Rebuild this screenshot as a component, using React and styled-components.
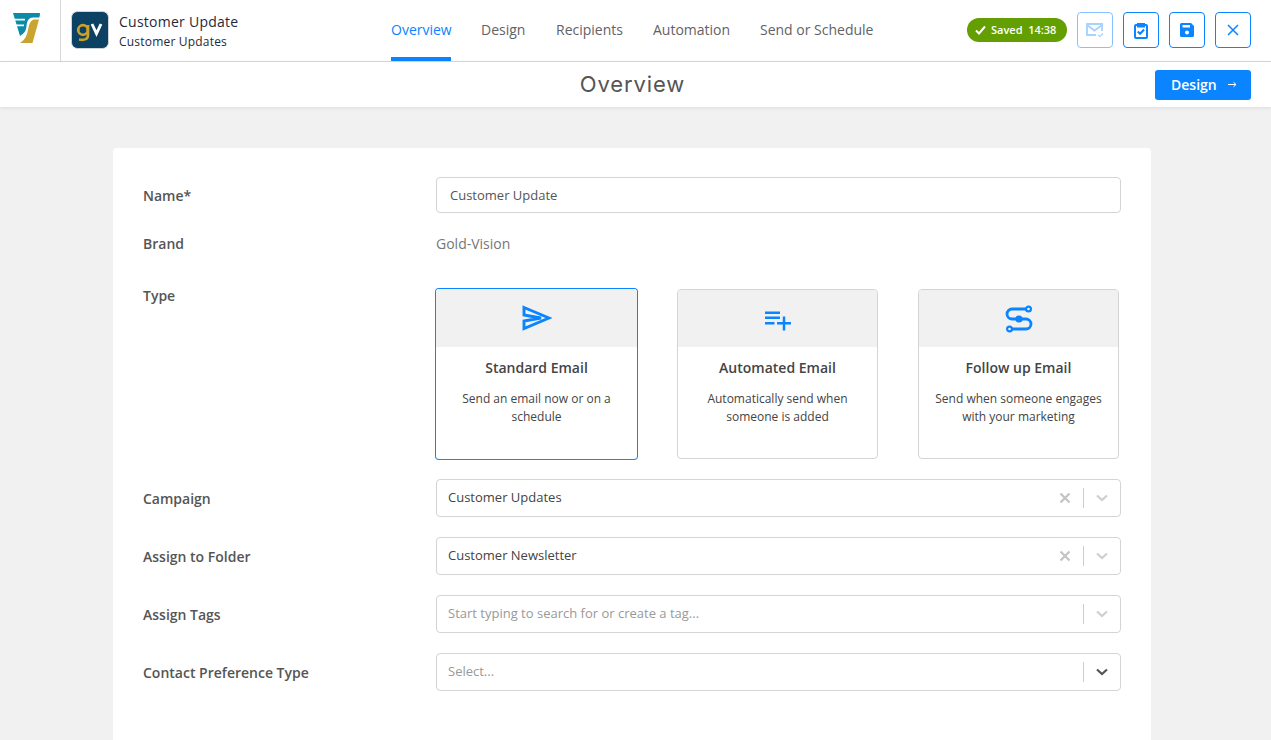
import React from "react";
import styled, { createGlobalStyle } from "styled-components";

const Global = createGlobalStyle`
  html, body { margin: 0; padding: 0; height: 100%; overflow: hidden; }
  body { background: #f1f1f1; font-family: "Open Sans", "Noto Sans", sans-serif; color: #333; }
  * { box-sizing: border-box; }
`;

const Page = styled.div`position: relative; width: 1271px; height: 740px; overflow: hidden; background: #f1f1f1;`;
const TopBar = styled.header`
  position: relative; height: 62px; background: #fff; border-bottom: 1px solid #d8d8d8;
`;
const LogoCell = styled.div`
  position: absolute; left: 0; top: 0; width: 61px; height: 61px; border-right: 1px solid #d8d8d8;
`;
const LogoSvg = styled.svg`position: absolute; left: 12px; top: 12px;`;
const BrandBadge = styled.svg`position: absolute; left: 71px; top: 11px; border-radius: 6px;`;
const TitleBlock = styled.div`position: absolute; left: 119px; top: 12px; color: #1f2a3a;`;
const Title = styled.div`font-size: 14px; line-height: 19px; font-weight: 500; letter-spacing: .25px;`;
const Subtitle = styled.div`font-size: 12px; line-height: 17px; margin-top: 2px; font-weight: 500; letter-spacing: .2px;`;
const Tab = styled.div`
  position: absolute; top: 0; height: 61px; line-height: 60px; font-size: 14px;
  left: ${p => p.$left}px;
  ${p => p.$active && "width: 60px; white-space: nowrap;"}
  color: ${p => (p.$active ? "#0a84ff" : "#5f6368")};
  border-bottom: ${p => (p.$active ? "4px solid #0a84ff" : "none")};
`;
const SavedPill = styled.div`
  position: absolute; left: 967px; top: 18px; width: 100px; height: 24px; border-radius: 12px; background: #639f00;
  color: #fff; font-size: 11px; font-weight: 600; line-height: 24px; padding-left: 8px;
  display: flex; align-items: center; gap: 5px; white-space: pre;
`;
const IconBtn = styled.div`
  position: absolute; top: 12px; left: ${p => p.$left}px; width: 36px; height: 36px; border-radius: 4px;
  border: 1px solid ${p => (p.$faded ? "#85c1ff" : "#0a84ff")}; background: #fff;
  display: flex; align-items: center; justify-content: center;
`;
const SubBar = styled.div`
  position: relative; height: 45px; background: #fff; box-shadow: 0 1px 4px rgba(0,0,0,.09);
`;
const Heading = styled.div`
  position: absolute; left: 0; width: 1265px; top: 8px; text-align: center; font-family: Inter, "Open Sans", sans-serif;
  font-size: 22px; line-height: 28px; color: #555; font-weight: 400; letter-spacing: .9px;
`;
const PrimaryBtn = styled.div`
  position: absolute; left: 1155px; top: 8px; width: 96px; height: 30px; border-radius: 3px; background: #0a84ff; color: #fff;
  font-size: 14px; font-weight: 600; display: flex; align-items: center; padding: 0 0 2px 16px; gap: 11px;
`;
const Card = styled.main`
  position: absolute; left: 113px; top: 148px; width: 1038px; height: 620px; background: #fff; border-radius: 4px;
`;
const Label = styled.div`
  position: absolute; left: 30px; top: ${p => p.$top}px; font-size: 14px; line-height: 20px; font-weight: 600; color: #555;
`;
const TextInput = styled.div`
  position: absolute; left: 323px; top: 29px; width: 685px; height: 36px; border: 1px solid #d4d4d4; border-radius: 4px;
  font-size: 13px; line-height: 35px; padding-left: 13px; color: #555;
`;
const Plain = styled.div`position: absolute; left: 323px; top: 86px; font-size: 14px; line-height: 20px; color: #777;`;
const TypeCard = styled.div`
  position: absolute; top: 141px; left: ${p => p.$left}px; width: ${p => (p.$sel ? 203 : 201)}px; height: ${p => (p.$sel ? 172 : 170)}px;
  ${p => p.$sel && "top: 140px;"}
  border: 1px solid ${p => (p.$sel ? "#0a84ff" : "#d4d4d4")}; border-radius: 4px; overflow: hidden; text-align: center;
  ${p => p.$sel && "border-bottom-color: #3a7fc4;"}
`;
const TypeHead = styled.div`
  height: ${p => (p.$sel ? 58 : 57)}px; background: #f1f1f1; display: flex; align-items: center; justify-content: center;
`;
const TypeTitle = styled.div`margin-top: 11px; font-size: 14px; line-height: 20px; font-weight: 600; color: #444;`;
const TypeDesc = styled.div`margin: 12px auto 0; width: 176px; font-size: 12px; line-height: 18px; color: #444;`;
const Select = styled.div`
  position: absolute; left: 323px; top: ${p => p.$top}px; width: 685px; height: 38px; border: 1px solid #d4d4d4; border-radius: 4px;
`;
const SelectText = styled.div`
  position: absolute; left: 11px; top: 0; line-height: 35px; font-size: 13px; color: ${p => (p.$ph ? "#999" : "#444")};
`;
const Sep = styled.div`position: absolute; left: 646px; top: 8px; width: 1px; height: 20px; background: #ccc;`;
const ClearIcon = styled.svg`position: absolute; left: 622px; top: 12px;`;
const Chevron = styled.svg`position: absolute; left: 658px; top: 13px;`;

const Select1 = ({ top, text, ph, clear, dark }) => (
  <Select $top={top}>
    <SelectText $ph={ph}>{text}</SelectText>
    {clear && (
      <ClearIcon width="12" height="12" viewBox="0 0 12 12">
        <path d="M1.5 1.5l9 9M10.5 1.5l-9 9" stroke="#c4c4c4" strokeWidth="2.3" fill="none" />
      </ClearIcon>
    )}
    <Sep />
    <Chevron width="14" height="10" viewBox="0 0 14 10">
      <path d="M2 2.5l5 4.6 5-4.6" stroke={dark ? "#555" : "#cfcfcf"} strokeWidth="2.2" fill="none" />
    </Chevron>
  </Select>
);

export default function App() {
  return (
    <Page>
      <Global />
      <TopBar>
        <LogoCell>
          <LogoSvg width="30" height="34" viewBox="0 0 30 34">
            <path d="M1 1H27.500Q28.300 1 28 2.500L27.300 5.500H21C16 5.500 15 10 14.500 14C14 18 13 21 8 24Z" fill="#0b8ba8" />
            <path d="M0 7.600H13M0 13.400H12" stroke="#fff" strokeWidth="1.7" fill="none" />
            <path d="M27 7.500L20.500 31H8Q13 28 15 22C17 16 16.500 9 22 7.500Z" fill="#c9a42e" />
          </LogoSvg>
        </LogoCell>
        <BrandBadge width="38" height="38" viewBox="0 0 38 38">
          <rect x=".5" y=".5" width="37" height="37" rx="6" fill="#0c4163" stroke="#cfd4d8" />
          <circle cx="12" cy="19" r="4.800" fill="none" stroke="#c9a227" strokeWidth="2.700" />
          <path d="M17 14v10c0 4-3 5.500-9 4.500" fill="none" stroke="#c9a227" strokeWidth="2.700" />
          <path d="M21 13l4.500 9.500 4.500-9.500" fill="none" stroke="#fff" strokeWidth="2.900" />
        </BrandBadge>
        <TitleBlock>
          <Title>Customer Update</Title>
          <Subtitle>Customer Updates</Subtitle>
        </TitleBlock>
        <Tab $left={391} $active>Overview</Tab>
        <Tab $left={481}>Design</Tab>
        <Tab $left={556}>Recipients</Tab>
        <Tab $left={653}>Automation</Tab>
        <Tab $left={760}>Send or Schedule</Tab>
        <SavedPill>
          <svg width="11" height="10" viewBox="0 0 11 10"><path d="M1 5.500l3 3 6-7" stroke="#fff" strokeWidth="2" fill="none" /></svg>
          <span>Saved  14:38</span>
        </SavedPill>
        <IconBtn $left={1077} $faded>
          <svg width="18" height="16" viewBox="0 0 18 16" fill="none" stroke="#a9d3ff" strokeWidth="1.900">
            <path d="M16 9V2H1V13h9" />
            <path d="M1 3l7.500 5.500L16 3" />
            <path d="M12 13l2 1.500 3-3" strokeWidth="1.300" />
          </svg>
        </IconBtn>
        <IconBtn $left={1123}>
          <svg width="14" height="17" viewBox="0 0 14 17" fill="none" stroke="#0a84ff" strokeWidth="2">
            <rect x="1" y="3" width="12" height="13" rx="1" />
            <path d="M4 2h6v2.500H4z" fill="#0a84ff" />
            <path d="M3.800 9.500l2.300 2.300 4-4.300" />
          </svg>
        </IconBtn>
        <IconBtn $left={1169}>
          <svg width="14" height="14" viewBox="0 0 14 14">
            <path d="M1.500 0H11l3 3v9.500a1.500 1.500 0 0 1-1.500 1.500h-11A1.500 1.500 0 0 1 0 12.500v-11A1.500 1.500 0 0 1 1.500 0z" fill="#0a84ff" />
            <rect x="2.500" y="2" width="7.500" height="2.500" fill="#fff" />
            <circle cx="7" cy="9.500" r="2" fill="#fff" />
          </svg>
        </IconBtn>
        <IconBtn $left={1215}>
          <svg width="12" height="12" viewBox="0 0 12 12"><path d="M1 1l10 10M11 1L1 11" stroke="#0a84ff" strokeWidth="1.500" fill="none" /></svg>
        </IconBtn>
      </TopBar>
      <SubBar>
        <Heading>Overview</Heading>
        <PrimaryBtn>
          <span>Design</span>
          <svg width="9" height="7" viewBox="0 0 9 7"><path d="M0 3.500h7.500M5.500 1.200l2.500 2.300-2.500 2.300" stroke="#fff" strokeWidth="1" fill="none" /></svg>
        </PrimaryBtn>
      </SubBar>
      <Card>
        <Label $top={38}>Name*</Label>
        <TextInput>Customer Update</TextInput>
        <Label $top={86}>Brand</Label>
        <Plain>Gold-Vision</Plain>
        <Label $top={138}>Type</Label>
        <TypeCard $left={322} $sel>
          <TypeHead $sel>
            <svg width="30" height="26" viewBox="0 0 30 26" fill="none" stroke="#0a84ff" strokeWidth="2.900">
              <path d="M2 2.500L27 13 2 23.500V16l17-3-17-3z" />
            </svg>
          </TypeHead>
          <TypeTitle>Standard Email</TypeTitle>
          <TypeDesc>Send an email now or on a schedule</TypeDesc>
        </TypeCard>
        <TypeCard $left={564}>
          <TypeHead>
            <svg width="28" height="24" viewBox="0 0 28 24" fill="none" stroke="#0a84ff" strokeWidth="2.500">
              <path d="M1 5.800h15M1 10.800h15M1 16.200h9.500M13 16.200h14M20 9.500v14" />
            </svg>
          </TypeHead>
          <TypeTitle>Automated Email</TypeTitle>
          <TypeDesc>Automatically send when someone is added</TypeDesc>
        </TypeCard>
        <TypeCard $left={805}>
          <TypeHead>
            <svg width="30" height="30" viewBox="0 0 30 30" fill="none" stroke="#0a84ff" strokeWidth="2.800">
              <path d="M22 5H8a5 5 0 0 0 0 10h14a5 5 0 0 1 0 10H8" />
              <circle cx="24.500" cy="5" r="2.400" fill="#f1f1f1" strokeWidth="2.200" />
              <circle cx="5.500" cy="25" r="2.400" fill="#f1f1f1" strokeWidth="2.200" />
              <circle cx="15" cy="15" r="3.600" fill="#0a84ff" stroke="none" />
            </svg>
          </TypeHead>
          <TypeTitle>Follow up Email</TypeTitle>
          <TypeDesc>Send when someone engages with your marketing</TypeDesc>
        </TypeCard>
        <Label $top={341}>Campaign</Label>
        <Select1 top={331} text="Customer Updates" clear />
        <Label $top={399}>Assign to Folder</Label>
        <Select1 top={389} text="Customer Newsletter" clear />
        <Label $top={457}>Assign Tags</Label>
        <Select1 top={447} text="Start typing to search for or create a tag..." ph />
        <Label $top={515}>Contact Preference Type</Label>
        <Select1 top={505} text="Select..." ph dark />
      </Card>
    </Page>
  );
}
